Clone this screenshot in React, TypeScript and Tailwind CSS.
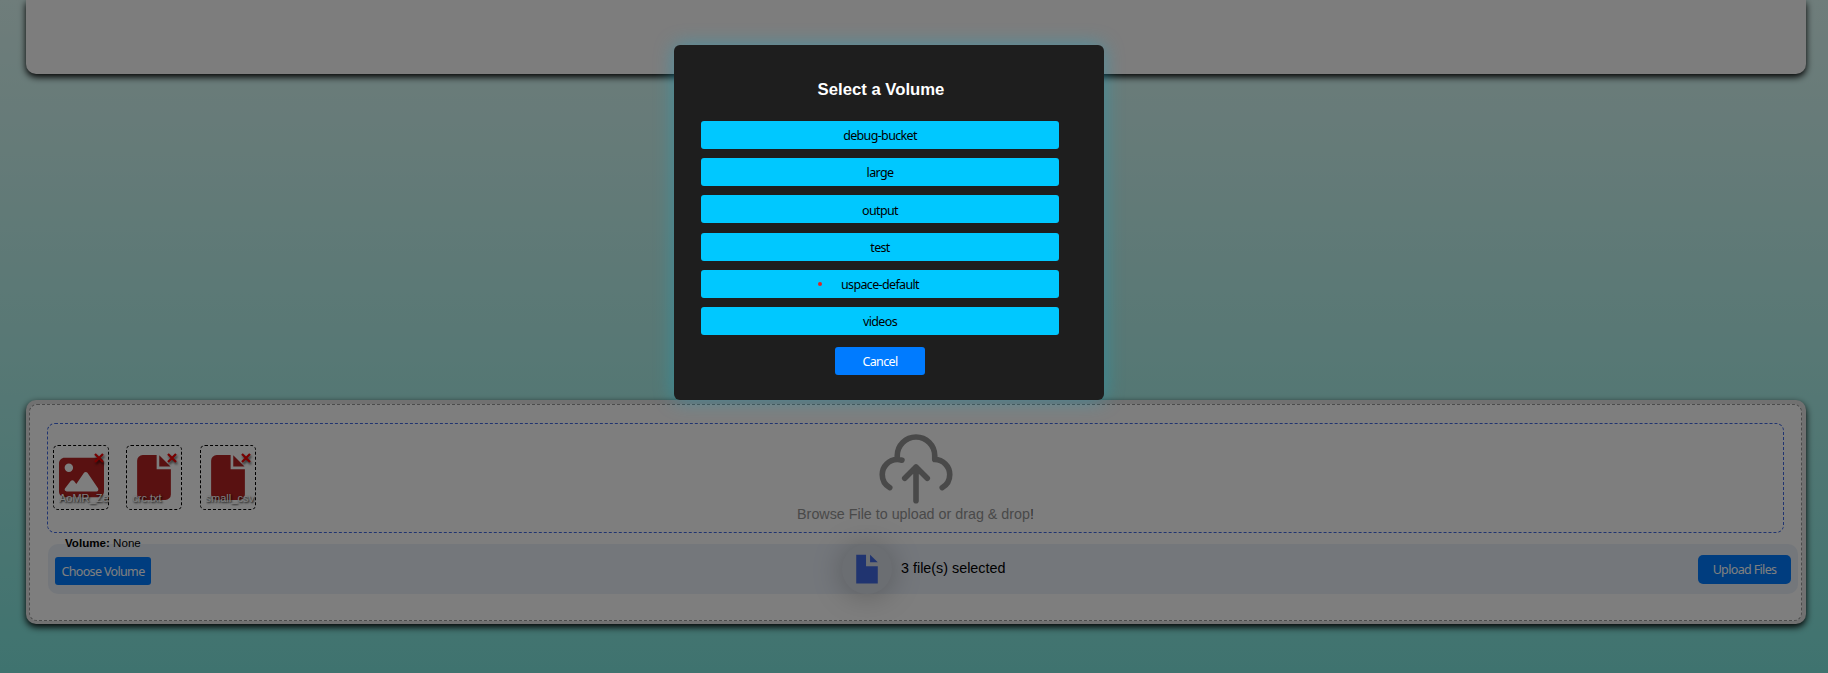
import { FaImage } from "react-icons/fa6";

const volumes = ["debug-bucket", "large", "output", "test", "uspace-default", "videos"];

const files = [
  { name: "AoMR_Ze", kind: "image" },
  { name: "crc.txt", kind: "file" },
  { name: "small_csv", kind: "file" },
];

const uiFont = "font-['Noto_Sans',sans-serif] text-[12.5px] leading-none tracking-[-0.65px]";

function FileIcon() {
  return (
    <svg viewBox="0 0 384 512" className="h-[45px] w-[34px] fill-current">
      <path d="M64 0H222V162H384V448a64 64 0 0 1-64 64H64a64 64 0 0 1-64-64V64A64 64 0 0 1 64 0z" />
      <path d="M252 4V130H380z" />
    </svg>
  );
}

function CloudIcon() {
  return (
    <svg viewBox="0 0 24 24" fill="none" className="h-[90px] w-[90px] shrink-0">
      <path
        d="M7 10V9C7 6.23858 9.23858 4 12 4C14.7614 4 17 6.23858 17 9V10C19.2091 10 21 11.7909 21 14C21 15.4806 20.1956 16.8084 19 17.5M7 10C4.79086 10 3 11.7909 3 14C3 15.4806 3.8044 16.8084 5 17.5M7 10C7.43285 10 7.84965 10.0688 8.24006 10.1959M12 12V21M12 12L15 15M12 12L9 15"
        stroke="#939393"
        strokeWidth="1.5"
        strokeLinecap="round"
        strokeLinejoin="round"
      />
    </svg>
  );
}

function Thumb({ name, kind }: { name: string; kind: string }) {
  return (
    <div className="relative flex h-[65px] w-14 items-center justify-center rounded-[5px] border border-dashed border-black text-[#b22222]">
      {kind === "image" ? <FaImage className="h-[45px] w-[45px]" /> : <FileIcon />}
      <svg
        viewBox="0 0 10 10"
        className="absolute top-[7px] right-1 h-[10px] w-[10px] drop-shadow-[1px_2px_1px_rgba(0,0,0,0.6)]"
      >
        <path d="M1 1L9 9M9 1L1 9" stroke="#f00000" strokeWidth="2.3" fill="none" />
      </svg>
      <span className="absolute top-[46px] left-[5px] h-[14px] w-[50px] overflow-hidden text-[11px] leading-[13px] text-white [text-shadow:1px_1px_2px_#000]">
        {name}
      </span>
    </div>
  );
}

function UploadPanel() {
  return (
    <section className="mt-[326px] ml-[26px] h-[224px] w-[1780px] rounded-[10px] bg-[#e2e2e2] pt-1 pr-1 pb-[3px] pl-[3px] shadow-[0_3px_7px_#000]">
      <div className="h-full rounded-[8px] border border-dashed border-[#999] bg-[#fcfcfc] pt-[18px] pl-[17px]">
        <div className="grid h-[110px] w-[1737px] grid-cols-[1fr_auto_1fr] rounded-[8px] border border-dashed border-[#4169e1]">
          <div className="flex gap-[17.3px] pt-[21px] pl-[5px]">
            {files.map((f) => (
              <Thumb key={f.name} name={f.name} kind={f.kind} />
            ))}
          </div>
          <div className="flex flex-col items-center">
            <div className="-mt-[2px] h-[84px]">
              <CloudIcon />
            </div>
            <p className="text-[14.3px] leading-[16px] text-[#939393]">
              Browse File to upload or drag &amp; drop<span className="text-[#666]">!</span>
            </p>
          </div>
        </div>
        <div className="relative mt-[11px] ml-px flex h-[50px] w-[1750px] items-center rounded-[10px] bg-[#e8eef7] pr-[7px] pl-[7px]">
          <p className="absolute -top-[8px] left-[17px] text-[11.6px] leading-[14px] text-black">
            <b>Volume:</b> None
          </p>
          <button className={`mt-[4px] h-7 w-24 rounded-[3px] bg-[#007bff] pt-[3px] text-white ${uiFont}`}>
            Choose Volume
          </button>
          <div className="ml-[691px] h-[50px] w-[50px] rounded-full bg-[rgba(70,66,66,0.1)] p-[2px] shadow-[0_2px_30px_rgba(0,0,0,0.25)]">
            <svg viewBox="0 0 32 32" className="h-[46px] w-[46px] fill-[#4169e1]">
              <path d="M15.331 6H8.5v20h15V14.154h-8.169z" />
              <path d="M18.153 6h-.009v5.342H23.5v-.002z" />
            </svg>
          </div>
          <p className="relative -top-px ml-[9px] text-[14.35px] leading-4 text-black">3 file(s) selected</p>
          <button className={`ml-auto h-[29px] w-[93px] rounded-[5px] bg-[#007bff] pt-[2px] text-white ${uiFont}`}>
            Upload Files
          </button>
        </div>
      </div>
    </section>
  );
}

function VolumeDialog() {
  return (
    <div className="absolute inset-0 bg-black/50">
      <div className="mt-[45px] ml-[674px] flex h-[355px] w-[430px] flex-col items-center rounded-[6px] bg-[#1e1e1e] pt-[35px] pr-[45px] pl-[27px] shadow-[0_0_20px_rgba(0,180,220,0.4)]">
        <h3 className="pl-[2px] text-[16.7px] leading-5 font-bold text-white">Select a Volume</h3>
        <ul className="mt-[21px] flex w-full flex-col gap-[9.2px]">
          {volumes.map((v) => (
            <li key={v} className="relative">
              <button className={`block h-7 w-full rounded-[3px] bg-[#00c8ff] pt-[3px] text-black ${uiFont}`}>{v}</button>
              {v === "uspace-default" && (
                <span className="absolute top-[12px] left-[117px] h-1 w-1 rounded-full bg-[#dc2626]" />
              )}
            </li>
          ))}
        </ul>
        <button className={`mt-3 h-7 w-[90px] rounded-[3px] bg-[#007bff] pt-[3px] text-white ${uiFont}`}>Cancel</button>
      </div>
    </div>
  );
}

export default function App() {
  return (
    <main className="relative h-[673px] w-full overflow-hidden bg-linear-to-b from-[#defaf6] to-[#7ee7df] font-['Liberation_Sans',Arial,sans-serif]">
      <section className="ml-[26px] h-[74px] w-[1780px] rounded-b-[10px] bg-[#fafafa] shadow-[0_3px_7px_#000]" />
      <UploadPanel />
      <VolumeDialog />
    </main>
  );
}
